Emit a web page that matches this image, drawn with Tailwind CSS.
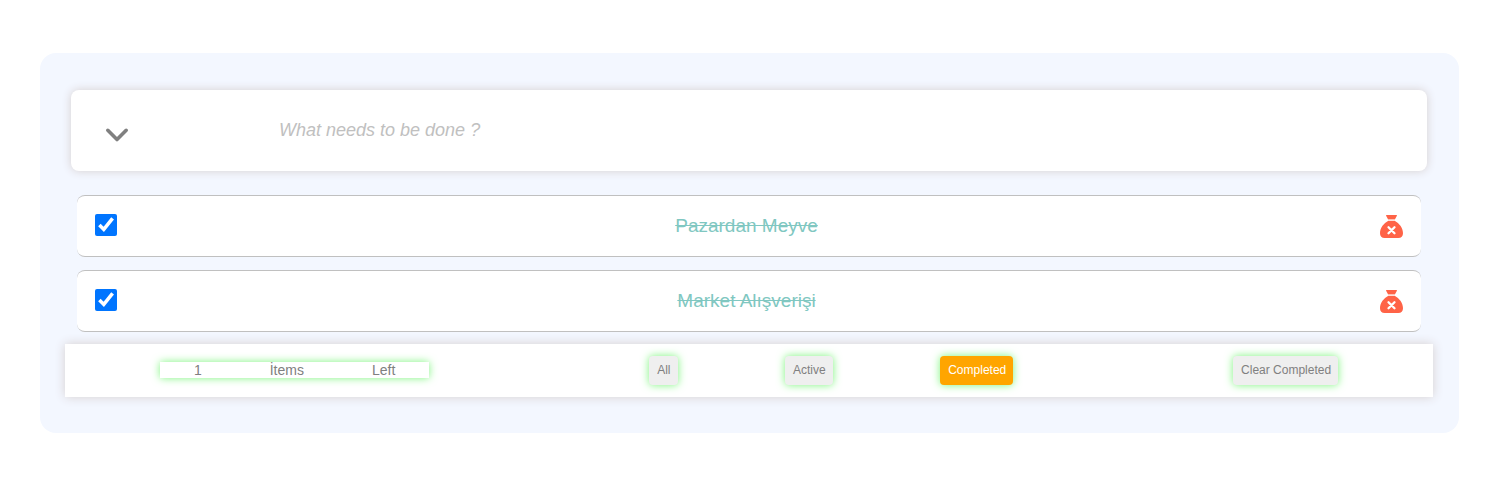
<!DOCTYPE html>
<html lang="tr">
<head>
<meta charset="utf-8">
<meta name="viewport" content="width=device-width, initial-scale=1">
<title>Todo</title>
<script src="https://cdn.jsdelivr.net/npm/@tailwindcss/browser@4"></script>
</head>
<body class="bg-white font-['Liberation_Sans',Arial,sans-serif] text-[#808080]">
<main class="mt-[53px] mb-8 ml-10 mr-[37px] rounded-2xl bg-[#f3f7ff] pl-[25px] pr-[26px] pt-[37px] pb-9">
  <form class="mx-1.5 flex h-[81px] items-center rounded-lg bg-white shadow-[0_0_10px_#d6cfcf]">
    <button type="button" aria-label="Toggle all" class="ml-[34px] mt-2 shrink-0">
      <svg class="size-6" viewBox="0 0 24 24" fill="none" stroke="#808080" stroke-width="3.6" stroke-linecap="round" stroke-linejoin="round"><path d="M2.8 7.3 12 16.5l9.200-9.200"/></svg>
    </button>
    <input type="text" aria-label="New todo" placeholder="What needs to be done ?" class="ml-[150px] mr-8 mb-0.5 min-w-0 flex-1 text-lg italic outline-none placeholder:text-[#c0c0c0]">
  </form>

  <ul class="mx-3 mt-6 flex flex-col gap-[13px]">
    <li class="flex min-h-[62px] items-center justify-between rounded-lg border-y border-[#c0c0c0] bg-white px-[18px]">
      <input id="t1" type="checkbox" checked class="mb-0.5 size-[22px]">
      <label for="t1" class="text-[19px] text-[#80c7c1] line-through">Pazardan Meyve</label>
      <button type="button" aria-label="Delete Pazardan Meyve" class="pl-1"><svg class="size-[23px]" viewBox="0 0 23 23"><path fill="#ffe0da" d="M8 4h7v2.500H8z"/><path fill="#ff6347" d="M6.600 0h9.800q.9 0 .5.800L15 4.200H8L6.100.8Q5.700 0 6.600 0zM8 6h7c4 2.300 8 6.600 8 12.200 0 3-1.700 4.800-4.700 4.800H4.700C1.700 23 0 21.200 0 18.200 0 12.600 4 8.300 8 6z"/><path d="m8.500 12.200 6 6m0-6-6 6" stroke="#fff" stroke-width="2.300" stroke-linecap="round"/></svg></button>
    </li>
    <li class="flex min-h-[62px] items-center justify-between rounded-lg border-y border-[#c0c0c0] bg-white px-[18px]">
      <input id="t2" type="checkbox" checked class="mb-0.5 size-[22px]">
      <label for="t2" class="text-[19px] text-[#80c7c1] line-through">Market Alışverişi</label>
      <button type="button" aria-label="Delete Market Alışverişi" class="pl-1"><svg class="size-[23px]" viewBox="0 0 23 23"><path fill="#ffe0da" d="M8 4h7v2.500H8z"/><path fill="#ff6347" d="M6.600 0h9.800q.9 0 .5.800L15 4.200H8L6.100.8Q5.700 0 6.600 0zM8 6h7c4 2.300 8 6.600 8 12.200 0 3-1.700 4.800-4.700 4.800H4.700C1.700 23 0 21.200 0 18.200 0 12.600 4 8.300 8 6z"/><path d="m8.500 12.200 6 6m0-6-6 6" stroke="#fff" stroke-width="2.300" stroke-linecap="round"/></svg></button>
    </li>
  </ul>

  <footer class="mt-3 flex items-center justify-around bg-white py-3 text-xs shadow-[0_0_10px_#d6cfcf]">
    <p class="mb-0.5 flex w-[19.7%] justify-around text-sm leading-4 shadow-[0_0_8px_#7df57d]"><span>1</span><span>İtems</span><span>Left</span></p>
    <nav class="flex w-[31%] justify-between px-[30px]">
      <button type="button" class="h-[29px] rounded bg-[#efefef] pb-0.5 pl-2 pr-[7px] shadow-[0_0_8px_#7df57d]">All</button>
      <button type="button" class="h-[29px] rounded bg-[#efefef] pb-0.5 pl-2 pr-[7px] shadow-[0_0_8px_#7df57d]">Active</button>
      <button type="button" class="h-[29px] rounded bg-[#ffa500] pb-0.5 pl-2 pr-[7px] text-white shadow-[0_0_8px_#7df57d]">Completed</button>
    </nav>
    <button type="button" class="h-[29px] rounded bg-[#efefef] pb-0.5 pl-2 pr-[7px] shadow-[0_0_8px_#7df57d]">Clear Completed</button>
  </footer>
</main>
</body>
</html>
